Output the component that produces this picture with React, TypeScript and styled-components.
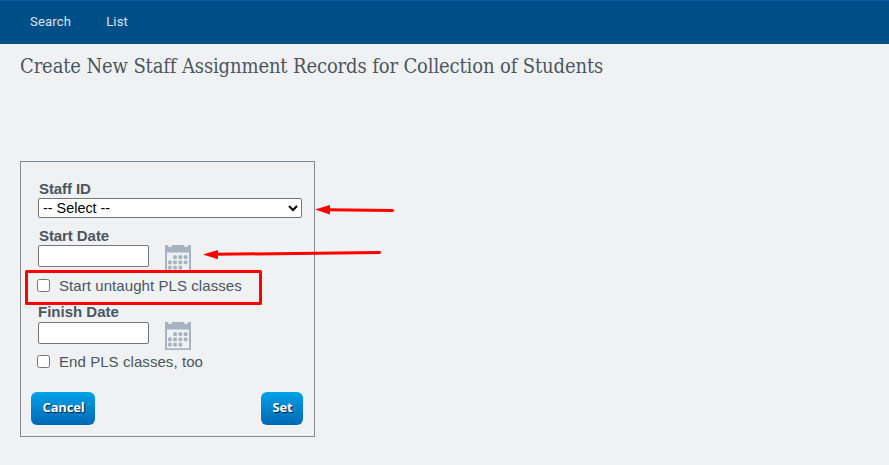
import React from "react";
import styled, { createGlobalStyle } from "styled-components";

const GlobalStyle = createGlobalStyle`
  *, *::before, *::after { box-sizing: border-box; }
  body {
    margin: 0;
    min-height: 100vh;
    background: #f0f1f3;
    color: #4a5661;
    font-family: "Liberation Sans", Arial, sans-serif;
    font-size: 15px;
    overflow: hidden;
  }
`;

const NavBar = styled.nav`
  display: flex;
  align-items: center;
  gap: 35px;
  height: 44px;
  padding: 0 30px 2px;
  background: #004f88;
  border-top: 1px solid #0060a8;
`;

const NavLink = styled.a`
  color: #dce5ee;
  font: 13px/16px Roboto, sans-serif;
  letter-spacing: 0.2px;
`;

const Title = styled.h1`
  width: max-content;
  margin: 0 0 0 20px;
  font: 400 20px/28px "Roboto Slab", "DejaVu Serif Condensed", "DejaVu Serif", serif;
  letter-spacing: -0.13px;
  color: #4a5661;
`;

const Page = styled.main`
  position: relative;
  padding-top: 8px;
`;

const Panel = styled.form`
  width: 295px;
  height: 276px;
  margin: 81px 0 0 20px;
  padding: 18px 11px 11px 10px;
  border: 1px solid #7b8c99;
  display: flex;
  flex-direction: column;
`;

const Field = styled.div<{ $height: number }>`
  height: ${(p) => p.$height}px;
  padding-left: 7px;
  flex: none;
`;

const Label = styled.label<{ $flush?: boolean }>`
  display: block;
  height: ${(p) => (p.$flush ? 19 : 18)}px;
  padding-left: ${(p) => (p.$flush ? 0 : 1)}px;
  font-weight: bold;
  line-height: 18px;
  letter-spacing: ${(p) => (p.$flush ? 0 : -0.08)}px;
`;

const Select = styled.select`
  display: block;
  width: 264px;
  height: 20px;
  margin: 0;
  padding: 0 0 1px;
  color: #000;
  background: #fff;
  border: 1px solid #767676;
  border-radius: 2px;
  font: 14.4px "Liberation Sans", Arial, sans-serif;
`;

const DateRow = styled.div`
  display: flex;
  align-items: flex-start;
  gap: 16px;
  height: 28px;
`;

const DateInput = styled.input`
  width: 111px;
  height: 22px;
  margin: 0;
  background: #fff;
  border: 1px solid #767676;
  border-radius: 2px;
`;

const CheckRow = styled.label`
  display: flex;
  align-items: center;
  gap: 9px;
  height: 29px;
  padding: 0 0 6px 6px;
  flex: none;
  white-space: nowrap;
  letter-spacing: 0.07px;
`;

const Checkbox = styled.input`
  width: 13px;
  height: 13px;
  margin: 0;
`;

const Actions = styled.div`
  display: flex;
  justify-content: space-between;
  margin-top: auto;
`;

const Button = styled.button<{ $width: number }>`
  width: ${(p) => p.$width}px;
  height: 33px;
  padding: 0 0 3px 1px;
  border: 0;
  border-radius: 6px;
  background: linear-gradient(#00a2e6, #0067b5);
  color: #fff;
  font: bold 13px "Open Sans", "Noto Sans", sans-serif;
  letter-spacing: -0.2px;
  text-shadow: 1px 1px 1px rgba(0, 0, 0, 0.75);
`;

const Annotations = styled.svg`
  position: absolute;
  left: 0;
  top: 0;
  pointer-events: none;
`;

const dots: [number, number][] = [
  [10, 12], [15.3, 12], [20.6, 12],
  [4.8, 17.3], [10, 17.3], [15.3, 17.3], [20.6, 17.3],
  [4.8, 22.6], [10, 22.6], [15.3, 22.6],
];

const CalendarIcon = () => (
  <svg width="26" height="28" viewBox="0 0 26 28">
    <rect width="26" height="28" fill="#a6b4c1" />
    <rect x="3" y="0" width="4" height="2" rx="0.8" fill="#e9edf0" />
    <rect x="19" y="0" width="4" height="2" rx="0.8" fill="#e9edf0" />
    <rect x="2" y="7.5" width="22" height="18.8" fill="#eef0f3" />
    {dots.map(([x, y]) => (
      <rect key={`${x}-${y}`} x={x - 1.8} y={y - 1.8} width="3.7" height="3.7" rx="1" fill="#a6b4c1" />
    ))}
  </svg>
);

export default function App() {
  return (
    <>
      <GlobalStyle />
      <NavBar>
        <NavLink>Search</NavLink>
        <NavLink>List</NavLink>
      </NavBar>
      <Page>
        <Title>Create New Staff Assignment Records for Collection of Students</Title>
        <Panel onSubmit={(e) => e.preventDefault()}>
          <Field $height={47}>
            <Label htmlFor="staff">Staff ID</Label>
            <Select id="staff">
              <option>-- Select --</option>
            </Select>
          </Field>
          <Field $height={47}>
            <Label htmlFor="start">Start Date</Label>
            <DateRow>
              <DateInput id="start" />
              <CalendarIcon />
            </DateRow>
          </Field>
          <CheckRow>
            <Checkbox type="checkbox" />
            Start untaught PLS classes
          </CheckRow>
          <Field $height={47}>
            <Label htmlFor="finish" $flush>Finish Date</Label>
            <DateRow>
              <DateInput id="finish" />
              <CalendarIcon />
            </DateRow>
          </Field>
          <CheckRow>
            <Checkbox type="checkbox" />
            End PLS classes, too
          </CheckRow>
          <Actions>
            <Button type="button" $width={64}>Cancel</Button>
            <Button type="submit" $width={42}>Set</Button>
          </Actions>
        </Panel>
        <Annotations width="889" height="421" viewBox="0 44 889 421">
          <path d="M163 272h30v4h-30z" fill="#f0f1f3" />
          <g stroke="#fe0000" fill="none" strokeWidth="3" strokeLinecap="round" strokeLinejoin="round">
            <rect x="26.5" y="271.5" width="234" height="32" />
            <path d="M328 209.7L392.5 210.5M216 254.3L379.5 252.5" />
          </g>
          <path d="M315 209.5L330 205V214.5ZM203 254.6L218 250V259.2Z" fill="#fe0000" />
        </Annotations>
      </Page>
    </>
  );
}
